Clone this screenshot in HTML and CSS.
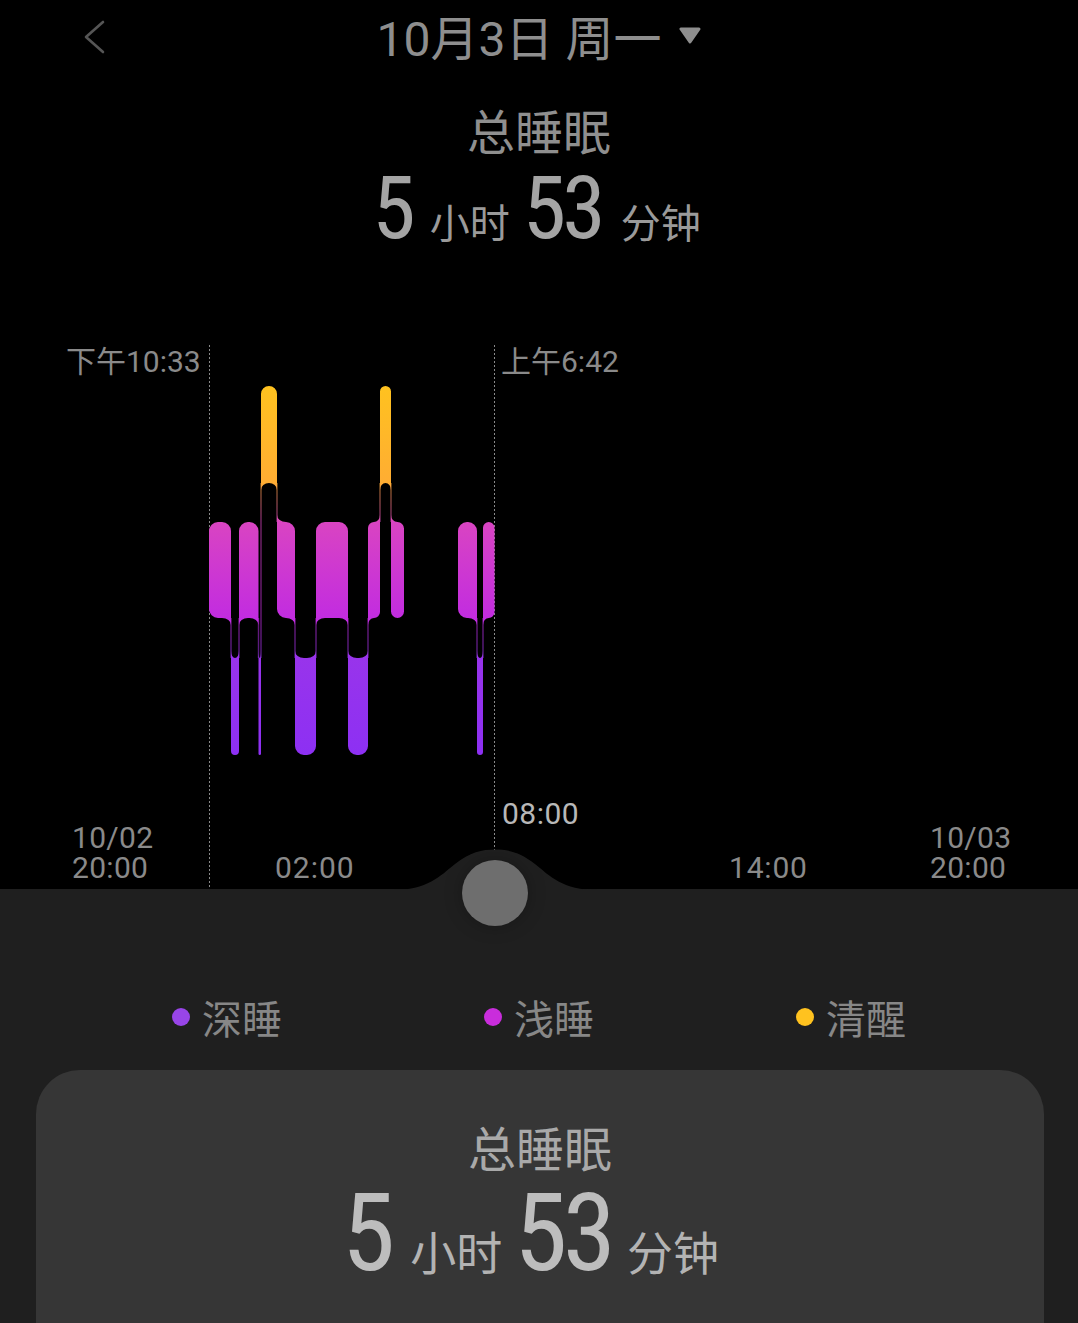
FILE: index.html
```html
<!DOCTYPE html>
<html lang="zh-CN">
<head>
<meta charset="utf-8">
<title>睡眠</title>
<link rel="stylesheet" href="styles.css">
</head>
<body>
<div class="screen">
  <header class="topbar">
    <div class="back">
      <svg width="24" height="36" viewBox="0 0 24 36"><polyline points="20,3 3,18 20,33" fill="none" stroke="#555" stroke-width="2.6" stroke-linecap="round" stroke-linejoin="round"/></svg>
    </div>
    <div class="date">
      <span class="date-text">10月3日 周一</span>
      <svg class="caret" width="24" height="17" viewBox="0 0 24 17"><path d="M3 2 L21 2 L12 15 Z" fill="#8e8e8e" stroke="#8e8e8e" stroke-width="3" stroke-linejoin="round"/></svg>
    </div>
    <div></div>
  </header>

  <section class="summary">
    <div class="summary-title">总睡眠</div>
    <div class="duration">
      <span class="num n1">5</span><span class="unit u1">小时</span><span class="num n2">53</span><span class="unit">分钟</span>
    </div>
  </section>

  <section class="chart">
    <svg class="chart-svg" width="1078" height="559" viewBox="0 0 1078 559">
      <defs>
        <linearGradient id="sg" gradientUnits="userSpaceOnUse" x1="0" y1="56" x2="0" y2="425">
          <stop offset="0" stop-color="#ffc21f"/>
          <stop offset="0.263" stop-color="#ffad33"/>
          <stop offset="0.369" stop-color="#d944c2"/>
          <stop offset="0.629" stop-color="#c22ce0"/>
          <stop offset="0.737" stop-color="#9834eb"/>
          <stop offset="1" stop-color="#8d30f3"/>
        </linearGradient>
      </defs>
      <line x1="209.5" y1="15" x2="209.5" y2="559" class="guide"/>
      <line x1="494.5" y1="15" x2="494.5" y2="520" class="guide"/>
      <g id="bars"></g>
      <path class="hump" d="M392 560 C428 560 440 546 455 534 C470 522 482 519.5 495 519.5 C508 519.5 520 522 535 534 C550 546 562 560 598 560 Z"/>
    </svg>
    <span class="axis-label t-start">下午10:33</span>
    <span class="axis-label t-end">上午6:42</span>
    <span class="axis-label t-now">08:00</span>
    <span class="axis-label t-a">10/02<br>20:00</span>
    <span class="axis-label t-b">02:00</span>
    <span class="axis-label t-c">14:00</span>
    <span class="axis-label t-d">10/03<br>20:00</span>
    <div class="knob"></div>
  </section>

  <section class="lower">
    <div class="legend">
      <div class="legend-item"><span class="dot deep"></span><span>深睡</span></div>
      <div class="legend-item"><span class="dot light"></span><span>浅睡</span></div>
      <div class="legend-item"><span class="dot awake"></span><span>清醒</span></div>
    </div>
    <div class="card">
      <div class="card-title">总睡眠</div>
      <div class="duration big">
        <span class="num n1">5</span><span class="unit u1">小时</span><span class="num n2">53</span><span class="unit">分钟</span>
      </div>
    </div>
  </section>
</div>
<script src="script.js"></script>
</body>
</html>
```

FILE: styles.css
```css
* { box-sizing: border-box; margin: 0; padding: 0; }
html, body { background: #000; }
body {
  width: 1078px;
  height: 1323px;
  overflow: hidden;
  font-family: Roboto, "Noto Sans CJK SC", sans-serif;
  color: #8c8c8c;
}

.topbar {
  height: 80px;
  display: grid;
  grid-template-columns: 1fr auto 1fr;
}
.back { padding-left: 83px; padding-top: 19px; }
.date { display: flex; gap: 17px; padding-left: 1px; }
.date-text { font-size: 48px; line-height: 80px; color: #8e8e8e; white-space: pre; }
.caret { margin-top: 27px; }

.summary { height: 250px; padding-top: 19px; text-align: center; }
.summary-title, .card-title {
  font-family: "Noto Sans CJK SC", sans-serif;
  font-size: 48px;
  line-height: 60px;
  color: #8f8f8f;
}
.duration {
  display: flex;
  justify-content: center;
  align-items: baseline;
  margin-top: 3.5px;
  padding-right: 5px;
  line-height: 90px;
  color: #a4a4a4;
}
.num {
  font-family: "Liberation Sans Narrow", "Roboto Condensed", Roboto, sans-serif;
  font-size: 88px;
  line-height: 90px;
}
.unit {
  font-family: "Noto Sans CJK SC", sans-serif;
  font-size: 40px;
  line-height: 40px;
  color: #9a9a9a;
}
.n1 { margin-right: 14px; }
.u1 { margin-right: 13px; }
.n2 { margin-right: 19px; letter-spacing: -4px; }

.chart { position: relative; height: 559px; background: #000; }
.chart-svg { position: absolute; left: 0; top: 0; overflow: visible; }
.guide { stroke: #8a8a8a; stroke-width: 1; stroke-dasharray: 2 2; }
.hump { fill: #1f1f1f; }
.axis-label {
  position: absolute;
  font-size: 30px;
  line-height: 30px;
  color: #8a8a8a;
  white-space: nowrap;
}
.t-start { left: 66px; top: 17px; }
.t-end { left: 501px; top: 17px; }
.t-now { left: 502px; top: 469px; color: #b8b8b8; letter-spacing: 0.5px; }
.t-a { left: 72px; top: 493px; letter-spacing: 0.3px; }
.t-b { left: 275px; top: 523px; letter-spacing: 1px; }
.t-c { left: 729px; top: 523px; letter-spacing: 0.8px; }
.t-d { left: 930px; top: 493px; letter-spacing: 0.3px; }
.knob {
  position: absolute;
  left: 462px;
  top: 530px;
  width: 66px;
  height: 66px;
  border-radius: 50%;
  background: #6e6e6e;
  box-shadow: 0 0 18px rgba(0, 0, 0, 0.25);
  z-index: 2;
}

.lower { background: #1f1f1f; height: 434px; padding-top: 99.5px; }
.legend {
  display: grid;
  grid-template-columns: repeat(3, 312px);
  justify-content: center;
  height: 56px;
}
.legend-item {
  display: flex;
  align-items: center;
  justify-content: center;
  gap: 12px;
  font-family: "Noto Sans CJK SC", sans-serif;
  font-size: 40px;
  line-height: 56px;
  color: #878787;
}
.dot { width: 18px; height: 18px; border-radius: 50%; }
.dot.deep { background: #9845e8; }
.dot.light { background: #c92ddc; }
.dot.awake { background: #ffc21f; }

.card {
  margin: 25.5px 34px 0 36px;
  height: 300px;
  background: #363636;
  border-radius: 44px 44px 0 0;
  padding-top: 46px;
  text-align: center;
}
.card-title { color: #a9a9a9; }
.duration.big { margin-top: 1.6px; line-height: 110px; padding-right: 19px; color: #bdbdbd; }
.duration.big .num { font-size: 108px; line-height: 110px; }
.duration.big .unit { font-size: 46px; line-height: 46px; color: #b3b3b3; }
.duration.big .n1 { margin-right: 15px; }
.duration.big .u1 { margin-right: 12px; }
.duration.big .n2 { margin-right: 16px; letter-spacing: -5px; }
```

FILE: script.js
```js
(function () {
  var LV = { A: [56, 153], L: [192, 288], D: [328, 425] };
  var groups = [
    [[209, 231, 'L'], [231, 239, 'D'], [239, 258.5, 'L'], [258.5, 261, 'D'], [261, 277, 'A'], [277, 295, 'L'],
     [295, 316, 'D'], [316, 348, 'L'], [348, 368, 'D'], [368, 380, 'L'], [380, 391, 'A'], [391, 404, 'L']],
    [[458, 477, 'L'], [477, 483, 'D'], [483, 494.5, 'L']]
  ];
  function rr(x0, y0, x1, y1, tl, tr, br, bl) {
    var d = 'M' + (x0 + tl) + ',' + y0 + ' L' + (x1 - tr) + ',' + y0;
    if (tr) d += ' A' + tr + ',' + tr + ' 0 0 1 ' + x1 + ',' + (y0 + tr);
    d += ' L' + x1 + ',' + (y1 - br);
    if (br) d += ' A' + br + ',' + br + ' 0 0 1 ' + (x1 - br) + ',' + y1;
    d += ' L' + (x0 + bl) + ',' + y1;
    if (bl) d += ' A' + bl + ',' + bl + ' 0 0 1 ' + x0 + ',' + (y1 - bl);
    d += ' L' + x0 + ',' + (y0 + tl);
    if (tl) d += ' A' + tl + ',' + tl + ' 0 0 1 ' + (x0 + tl) + ',' + y0;
    return d + ' Z ';
  }
  var shapes = '', lines = '';
  groups.forEach(function (g) {
    g.forEach(function (s, i) {
      var x0 = s[0], x1 = s[1], w = x1 - x0;
      var top = LV[s[2]][0], bot = LV[s[2]][1];
      var R = Math.min(9, w / 2), F = Math.min(9, w / 2), FY = 7;
      var tl = R, tr = R, br = R, bl = R;
      var p = g[i - 1], n = g[i + 1];
      if (p) {
        var pt = LV[p[2]][0];
        if (pt > top) {
          bl = 0;
          shapes += 'M' + x0 + ',' + bot + ' L' + (x0 + F) + ',' + bot + ' A' + F + ',' + FY + ' 0 0 0 ' + x0 + ',' + (bot + FY) + ' Z ';
        } else {
          tl = 0;
          shapes += 'M' + x0 + ',' + top + ' L' + x0 + ',' + (top - FY) + ' A' + F + ',' + FY + ' 0 0 0 ' + (x0 + F) + ',' + top + ' Z ';
        }
      }
      if (n) {
        var nt = LV[n[2]][0];
        if (nt > top) {
          br = 0;
          shapes += 'M' + x1 + ',' + bot + ' L' + x1 + ',' + (bot + FY) + ' A' + F + ',' + FY + ' 0 0 0 ' + (x1 - F) + ',' + bot + ' Z ';
          lines += 'M' + (x1 - 0.7) + ',' + bot + ' L' + (x1 + 0.7) + ',' + bot + ' L' + (x1 + 0.7) + ',' + nt + ' L' + (x1 - 0.7) + ',' + nt + ' Z ';
        } else {
          tr = 0;
          shapes += 'M' + x1 + ',' + top + ' L' + (x1 - F) + ',' + top + ' A' + F + ',' + FY + ' 0 0 0 ' + x1 + ',' + (top - FY) + ' Z ';
          var nb = LV[n[2]][1];
          lines += 'M' + (x1 - 0.7) + ',' + nb + ' L' + (x1 + 0.7) + ',' + nb + ' L' + (x1 + 0.7) + ',' + top + ' L' + (x1 - 0.7) + ',' + top + ' Z ';
        }
      }
      shapes += rr(x0, top, x1, bot, tl, tr, br, bl);
    });
  });
  var ns = 'http://www.w3.org/2000/svg';
  var g = document.getElementById('bars');
  var l = document.createElementNS(ns, 'path');
  l.setAttribute('d', lines);
  l.setAttribute('fill', 'url(#sg)');
  l.setAttribute('opacity', '0.55');
  g.appendChild(l);
  var p = document.createElementNS(ns, 'path');
  p.setAttribute('d', shapes);
  p.setAttribute('fill', 'url(#sg)');
  g.appendChild(p);
})();
```
